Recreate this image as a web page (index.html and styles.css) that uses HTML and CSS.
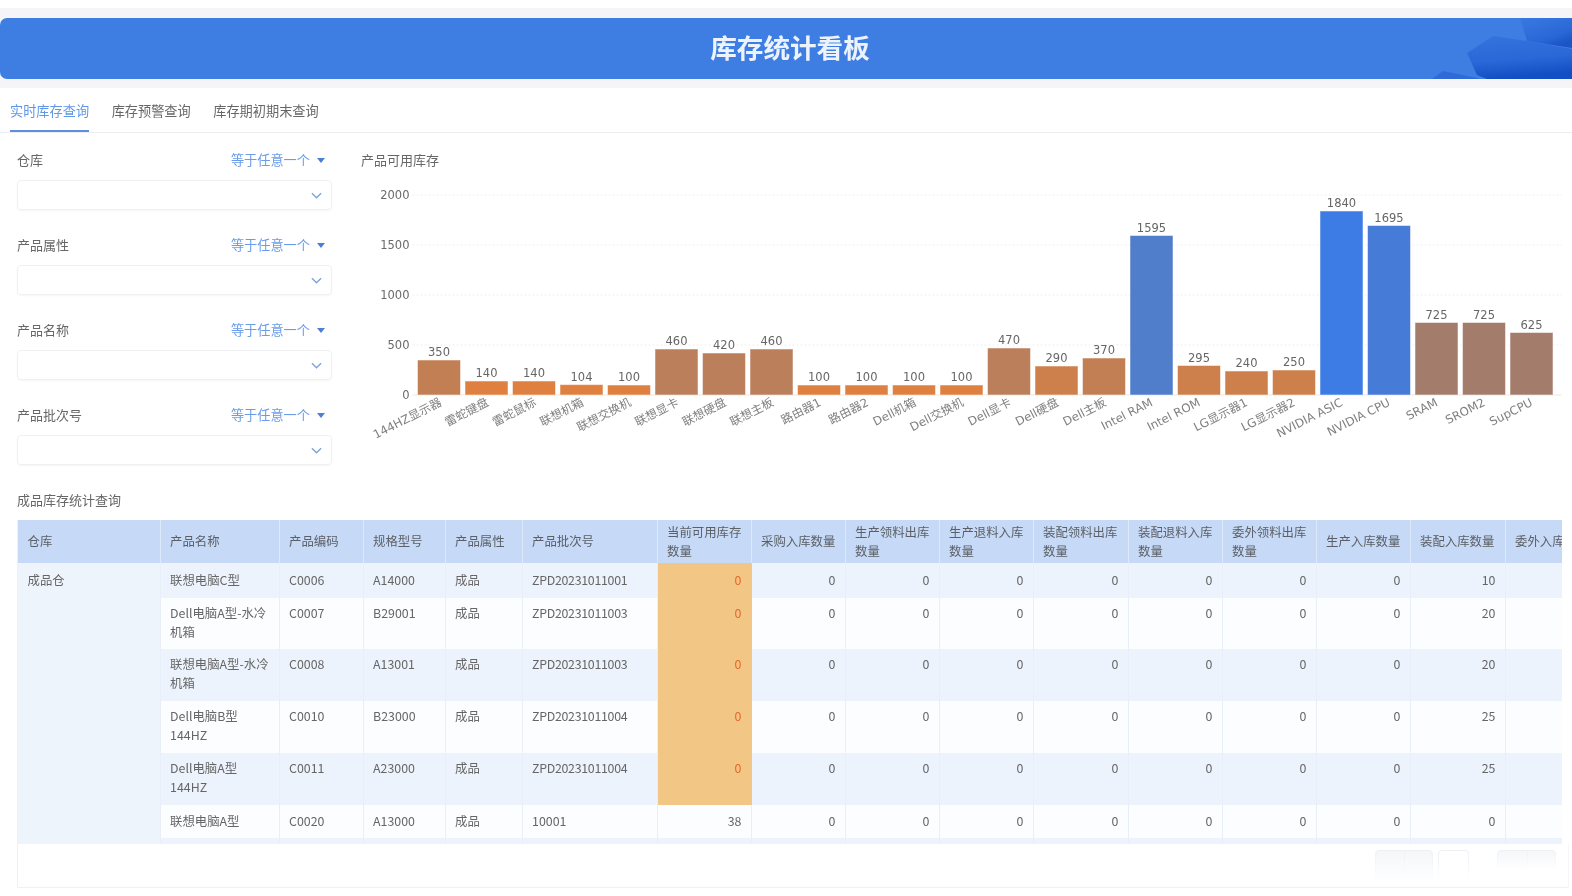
FILE: index.html
```html
<!DOCTYPE html>
<html lang="zh-CN">
<head>
<meta charset="utf-8">
<title>库存统计看板</title>
<link rel="stylesheet" href="styles.css">
</head>
<body>
<div class="page">
  <div class="strip">
    <header class="banner">
      <svg class="banner-art" viewBox="0 0 150 61" preserveAspectRatio="none" aria-hidden="true">
        <defs>
          <linearGradient id="artA" x1="0" y1="0" x2="0.6" y2="1"><stop offset="0" stop-color="#3a78e0"/><stop offset="0.7" stop-color="#2a68d8"/><stop offset="1" stop-color="#1b55c6"/></linearGradient>
          <linearGradient id="artB" x1="0" y1="0" x2="0.2" y2="1"><stop offset="0" stop-color="#3573de"/><stop offset="0.6" stop-color="#2a68d8"/><stop offset="1" stop-color="#134fc4"/></linearGradient>
        </defs>
        <polygon points="10,61 21,53 55,60 58,61" fill="#2e6bd9"/>
        <polygon points="45,35 71,18 105,23 150,31 150,61 65,61 55,57" fill="url(#artB)"/>
        <polygon points="98,0 150,0 150,30 105,23" fill="url(#artA)"/>
      </svg>
      <h1 class="banner-title">库存统计看板</h1>
    </header>
  </div>

  <nav class="tabs">
    <a class="tab tab-active">实时库存查询</a>
    <a class="tab">库存预警查询</a>
    <a class="tab">库存期初期末查询</a>
  </nav>

  <section class="top">
    <aside class="filters">
      <div class="filter">
        <div class="filter-head"><span>仓库</span><span class="op">等于任意一个<i class="caret"></i></span></div>
        <div class="select"><svg class="chev" viewBox="0 0 12 7"><path d="M1 1l5 5 5-5"/></svg></div>
      </div>
      <div class="filter">
        <div class="filter-head"><span>产品属性</span><span class="op">等于任意一个<i class="caret"></i></span></div>
        <div class="select"><svg class="chev" viewBox="0 0 12 7"><path d="M1 1l5 5 5-5"/></svg></div>
      </div>
      <div class="filter">
        <div class="filter-head"><span>产品名称</span><span class="op">等于任意一个<i class="caret"></i></span></div>
        <div class="select"><svg class="chev" viewBox="0 0 12 7"><path d="M1 1l5 5 5-5"/></svg></div>
      </div>
      <div class="filter">
        <div class="filter-head"><span>产品批次号</span><span class="op">等于任意一个<i class="caret"></i></span></div>
        <div class="select"><svg class="chev" viewBox="0 0 12 7"><path d="M1 1l5 5 5-5"/></svg></div>
      </div>
    </aside>

    <div class="chart-panel">
      <div class="chart-title">产品可用库存</div>
      <svg class="chart" viewBox="0.5 0 1212 270">
        <g class="grid">
          <line x1="53" y1="15" x2="1202" y2="15"/>
          <line x1="53" y1="65" x2="1202" y2="65"/>
          <line x1="53" y1="115" x2="1202" y2="115"/>
          <line x1="53" y1="165" x2="1202" y2="165"/>
        </g>
        <line class="axis" x1="53" y1="215" x2="1202" y2="215"/>
        <g class="ylabels">
          <text x="50" y="19">2000</text>
          <text x="50" y="69">1500</text>
          <text x="50" y="119">1000</text>
          <text x="50" y="169">500</text>
          <text x="50" y="219">0</text>
        </g>
        <g class="bars">
          <rect class="t-c" x="58" y="180" width="43" height="35"/>
          <rect class="t-a" x="105.5" y="201" width="43" height="14"/>
          <rect class="t-a" x="153" y="201" width="43" height="14"/>
          <rect class="t-a" x="200.5" y="204.6" width="43" height="10.4"/>
          <rect class="t-a" x="248" y="205" width="43" height="10"/>
          <rect class="t-d" x="295.5" y="169" width="43" height="46"/>
          <rect class="t-d" x="343" y="173" width="43" height="42"/>
          <rect class="t-d" x="390.5" y="169" width="43" height="46"/>
          <rect class="t-a" x="438" y="205" width="43" height="10"/>
          <rect class="t-a" x="485.5" y="205" width="43" height="10"/>
          <rect class="t-a" x="533" y="205" width="43" height="10"/>
          <rect class="t-a" x="580.5" y="205" width="43" height="10"/>
          <rect class="t-d" x="628" y="168" width="43" height="47"/>
          <rect class="t-b" x="675.5" y="186" width="43" height="29"/>
          <rect class="t-c" x="723" y="178" width="43" height="37"/>
          <rect class="t-f" x="770.5" y="55.5" width="43" height="159.5"/>
          <rect class="t-b" x="818" y="185.5" width="43" height="29.5"/>
          <rect class="t-b" x="865.5" y="191" width="43" height="24"/>
          <rect class="t-b" x="913" y="190" width="43" height="25"/>
          <rect class="t-h" x="960.5" y="31" width="43" height="184"/>
          <rect class="t-g" x="1008" y="45.5" width="43" height="169.5"/>
          <rect class="t-e" x="1055.5" y="142.5" width="43" height="72.5"/>
          <rect class="t-e" x="1103" y="142.5" width="43" height="72.5"/>
          <rect class="t-e" x="1150.5" y="152.5" width="43" height="62.5"/>
        </g>
        <g class="values">
          <text x="79.5" y="176">350</text>
          <text x="127" y="197">140</text>
          <text x="174.5" y="197">140</text>
          <text x="222" y="200.5">104</text>
          <text x="269.5" y="201">100</text>
          <text x="317" y="165">460</text>
          <text x="364.5" y="169">420</text>
          <text x="412" y="165">460</text>
          <text x="459.5" y="201">100</text>
          <text x="507" y="201">100</text>
          <text x="554.5" y="201">100</text>
          <text x="602" y="201">100</text>
          <text x="649.5" y="164">470</text>
          <text x="697" y="182">290</text>
          <text x="744.5" y="174">370</text>
          <text x="792" y="51.5">1595</text>
          <text x="839.5" y="181.5">295</text>
          <text x="887" y="187">240</text>
          <text x="934.5" y="186">250</text>
          <text x="982" y="27">1840</text>
          <text x="1029.5" y="41.5">1695</text>
          <text x="1077" y="138.5">725</text>
          <text x="1124.5" y="138.5">725</text>
          <text x="1172" y="148.5">625</text>
        </g>
        <g class="names">
          <text transform="translate(83 225) rotate(-27)">144HZ显示器</text>
          <text transform="translate(130 225) rotate(-27)">雷蛇键盘</text>
          <text transform="translate(177.5 225) rotate(-27)">雷蛇鼠标</text>
          <text transform="translate(225 225) rotate(-27)">联想机箱</text>
          <text transform="translate(272.5 225) rotate(-27)">联想交换机</text>
          <text transform="translate(320 225) rotate(-27)">联想显卡</text>
          <text transform="translate(367.5 225) rotate(-27)">联想硬盘</text>
          <text transform="translate(415 225) rotate(-27)">联想主板</text>
          <text transform="translate(462.5 225) rotate(-27)">路由器1</text>
          <text transform="translate(510 225) rotate(-27)">路由器2</text>
          <text transform="translate(557.5 225) rotate(-27)">Dell机箱</text>
          <text transform="translate(605 225) rotate(-27)">Dell交换机</text>
          <text transform="translate(652.5 225) rotate(-27)">Dell显卡</text>
          <text transform="translate(700 225) rotate(-27)">Dell硬盘</text>
          <text transform="translate(747.5 225) rotate(-27)">Dell主板</text>
          <text transform="translate(794 225) rotate(-27)">Intel RAM</text>
          <text transform="translate(841.5 225) rotate(-27)">Intel ROM</text>
          <text transform="translate(889 225) rotate(-27)">LG显示器1</text>
          <text transform="translate(936.5 225) rotate(-27)">LG显示器2</text>
          <text transform="translate(984 225) rotate(-27)">NVIDIA ASIC</text>
          <text transform="translate(1031.5 225) rotate(-27)">NVIDIA CPU</text>
          <text transform="translate(1079 225) rotate(-27)">SRAM</text>
          <text transform="translate(1126.5 225) rotate(-27)">SROM2</text>
          <text transform="translate(1174 225) rotate(-27)">SupCPU</text>
        </g>
      </svg>
    </div>
  </section>

  <h2 class="section-title">成品库存统计查询</h2>

  <div class="table-card">
    <div class="table-clip">
      <table class="stock">
        <colgroup>
          <col class="w142"><col class="w119"><col class="w84"><col class="w82"><col class="w77"><col class="w135">
          <col class="w94"><col class="w94"><col class="w94"><col class="w94"><col class="w95"><col class="w94"><col class="w94"><col class="w94"><col class="w95"><col class="w94">
        </colgroup>
        <thead>
          <tr>
            <th>仓库</th><th>产品名称</th><th>产品编码</th><th>规格型号</th><th>产品属性</th><th>产品批次号</th>
            <th>当前可用库存<br>数量</th><th>采购入库数量</th><th>生产领料出库<br>数量</th><th>生产退料入库<br>数量</th><th>装配领料出库<br>数量</th><th>装配退料入库<br>数量</th><th>委外领料出库<br>数量</th><th>生产入库数量</th><th>装配入库数量</th><th>委外入库数量</th>
          </tr>
        </thead>
        <tbody>
          <tr class="row-a h35 one">
            <td class="store" rowspan="7">成品仓</td><td>联想电脑C型</td><td>C0006</td><td>A14000</td><td>成品</td><td class="batch">ZPD20231011001</td>
            <td class="num warn">0</td><td class="num">0</td><td class="num">0</td><td class="num">0</td><td class="num">0</td><td class="num">0</td><td class="num">0</td><td class="num">0</td><td class="num">10</td><td class="num">0</td>
          </tr>
          <tr class="row-b h51">
            <td>Dell电脑A型-水冷<br>机箱</td><td>C0007</td><td>B29001</td><td>成品</td><td class="batch">ZPD20231011003</td>
            <td class="num warn">0</td><td class="num">0</td><td class="num">0</td><td class="num">0</td><td class="num">0</td><td class="num">0</td><td class="num">0</td><td class="num">0</td><td class="num">20</td><td class="num">0</td>
          </tr>
          <tr class="row-a h52">
            <td>联想电脑A型-水冷<br>机箱</td><td>C0008</td><td>A13001</td><td>成品</td><td class="batch">ZPD20231011003</td>
            <td class="num warn">0</td><td class="num">0</td><td class="num">0</td><td class="num">0</td><td class="num">0</td><td class="num">0</td><td class="num">0</td><td class="num">0</td><td class="num">20</td><td class="num">0</td>
          </tr>
          <tr class="row-b h52">
            <td>Dell电脑B型<br>144HZ</td><td>C0010</td><td>B23000</td><td>成品</td><td class="batch">ZPD20231011004</td>
            <td class="num warn">0</td><td class="num">0</td><td class="num">0</td><td class="num">0</td><td class="num">0</td><td class="num">0</td><td class="num">0</td><td class="num">0</td><td class="num">25</td><td class="num">0</td>
          </tr>
          <tr class="row-a h52">
            <td>Dell电脑A型<br>144HZ</td><td>C0011</td><td>A23000</td><td>成品</td><td class="batch">ZPD20231011004</td>
            <td class="num warn">0</td><td class="num">0</td><td class="num">0</td><td class="num">0</td><td class="num">0</td><td class="num">0</td><td class="num">0</td><td class="num">0</td><td class="num">25</td><td class="num">0</td>
          </tr>
          <tr class="row-b h33 one">
            <td>联想电脑A型</td><td>C0020</td><td>A13000</td><td>成品</td><td>10001</td>
            <td class="num">38</td><td class="num">0</td><td class="num">0</td><td class="num">0</td><td class="num">0</td><td class="num">0</td><td class="num">0</td><td class="num">0</td><td class="num">0</td><td class="num">0</td>
          </tr>
          <tr class="row-a h33 one">
            <td></td><td></td><td></td><td></td><td></td>
            <td></td><td></td><td></td><td></td><td></td><td></td><td></td><td></td><td></td><td></td>
          </tr>
        </tbody>
      </table>
    </div>
    <div class="pager">
      <span class="ghost ghost-a"><i></i></span>
      <span class="ghost ghost-b"></span>
      <span class="ghost ghost-c"><i></i></span>
    </div>
  </div>
</div>
</body>
</html>
```

FILE: styles.css
```css
* { box-sizing: border-box; }
html, body { margin: 0; padding: 0; background: #fff; }
body {
  width: 1572px;
  height: 896px;
  overflow: hidden;
  font-family: "Noto Sans CJK SC", "Noto Sans", sans-serif;
  font-size: 13px;
  color: #666;
}
.page { padding-top: 8px; filter: blur(0.5px); }

.strip { background: #f5f5f8; padding: 10px 0 9px; }
.banner {
  position: relative;
  height: 61px;
  background: #3e7ee3;
  border-radius: 7px 0 0 7px;
  overflow: hidden;
  display: flex;
  align-items: center;
  justify-content: center;
}
.banner-art { position: absolute; right: 0; top: 0; width: 150px; height: 61px; }
.banner-title {
  position: relative;
  margin: 0 0 4px 8px;
  font-size: 26.6px;
  line-height: 36px;
  font-weight: 700;
  color: #edf3fc;
}

.tabs {
  display: flex;
  gap: 22.5px;
  height: 45px;
  padding-left: 10px;
  border-bottom: 1px solid #eceef2;
}
.tab {
  height: 44px;
  line-height: 45px;
  font-size: 13.2px;
  color: #666;
}
.tab-active { color: #5e96e8; border-bottom: 2px solid #5e8fdc; }

.top { display: flex; }
.filters {
  width: 360px;
  padding: 17px 0 0 17px;
  display: flex;
  flex-direction: column;
  gap: 25px;
}
.filter-head {
  width: 315px;
  height: 20px;
  line-height: 20px;
  display: flex;
  justify-content: space-between;
  margin-bottom: 10px;
  font-size: 13px;
}
.op { color: #6a9ce8; display: flex; align-items: center; padding-right: 7px; font-size: 13.2px; }
.caret {
  margin-left: 7px;
  width: 0;
  height: 0;
  border-left: 4.5px solid transparent;
  border-right: 4.5px solid transparent;
  border-top: 5.5px solid #4a7fd6;
}
.select {
  width: 315px;
  height: 30px;
  border: 1px solid #eef0f3;
  border-radius: 4px;
  box-shadow: 0 1px 2px rgba(0, 0, 0, .04);
  display: flex;
  align-items: center;
  justify-content: flex-end;
  padding-right: 9px;
}
.chev { width: 11px; height: 7px; fill: none; stroke: #7ea3dc; stroke-width: 1.5; }

.chart-panel { flex: 1; padding-top: 17px; }
.chart-title { height: 20px; line-height: 20px; padding-left: 1px; margin-bottom: 10px; color: #666; }
.chart { display: block; width: 1212px; height: 270px; overflow: visible; }
.grid line { stroke: #eeeeee; stroke-dasharray: 2 2; }
.axis { stroke: #f2e4da; }
.ylabels text { font: 11.5px "DejaVu Sans", sans-serif; fill: #6a6a6a; text-anchor: end; }
.values text { font: 11.5px "DejaVu Sans", sans-serif; fill: #666; text-anchor: middle; }
.names text { font: 11.8px "DejaVu Sans", "Noto Sans CJK SC", sans-serif; fill: #808080; text-anchor: end; }
.bars rect { stroke: rgba(255, 255, 255, .5); stroke-width: 1; }
.t-a { fill: #df8040; }
.t-b { fill: #cd804c; }
.t-c { fill: #c37f54; }
.t-d { fill: #bc7f5b; }
.t-e { fill: #a47c6c; }
.t-f { fill: #507ecb; }
.t-g { fill: #467bd8; }
.t-h { fill: #3d7ce4; }

.section-title {
  margin: 25px 0 10px 17px;
  font-size: 13px;
  line-height: 20px;
  font-weight: 400;
  color: #666;
}

.table-card {
  width: 1552px;
  margin-left: 17px;
  border-left: 1px solid #eef1f6;
  border-bottom: 1px solid #eef1f6;
}
.table-clip { width: 1544px; height: 324px; overflow: hidden; }
.stock {
  table-layout: fixed;
  width: 1581px;
  border-collapse: collapse;
  font-size: 12.4px;
  line-height: 19px;
  white-space: nowrap;
}
.w142 { width: 142px; }
.w119 { width: 119px; }
.w84 { width: 84px; }
.w82 { width: 82px; }
.w77 { width: 77px; }
.w135 { width: 135px; }
.w94 { width: 94px; }
.w95 { width: 95px; }
.stock th {
  height: 43px;
  padding: 0 10px 0 9.5px;
  background: #c6d9f6;
  border-right: 1px solid #dde8fa;
  color: #5c6066;
  font-weight: 400;
  text-align: left;
}
.stock td {
  padding: 6px 9px 6px 9.5px;
  vertical-align: top;
  border-right: 1px solid #e9eff8;
}
.stock td.batch { letter-spacing: -.3px; }
.one td { vertical-align: middle; padding-top: 0; padding-bottom: 0; }
.h35 { height: 35px; }
.h51 { height: 51px; }
.h52 { height: 52px; }
.h33 { height: 33px; }
.row-a td { background: #edf3fc; }
.row-b td { background: #fcfdff; }
.stock td.store { background: #eef4fc; vertical-align: top; padding-top: 8px; }
.stock td.num { text-align: right; }
.stock td.warn { background: #f2c785; color: #e8652c; border-right-color: #f2c785; }

.pager { position: relative; height: 43px; overflow: hidden; border-right: 1px solid #f6f7fa; }
.ghost {
  position: absolute;
  top: 6px;
  height: 32px;
  border: 1px solid #eef0f4;
  border-bottom: 0;
  border-radius: 4px 4px 0 0;
  -webkit-mask-image: linear-gradient(#000, transparent);
}
.ghost i { position: absolute; left: 50%; top: 0; bottom: 0; border-left: 1px solid #eef0f4; }
.ghost-a { left: 1357px; width: 58px; background: #f4f6f9; }
.ghost-b { left: 1420px; width: 31px; }
.ghost-c { left: 1479px; width: 59px; background: #f4f6f9; height: 20px; }
```
